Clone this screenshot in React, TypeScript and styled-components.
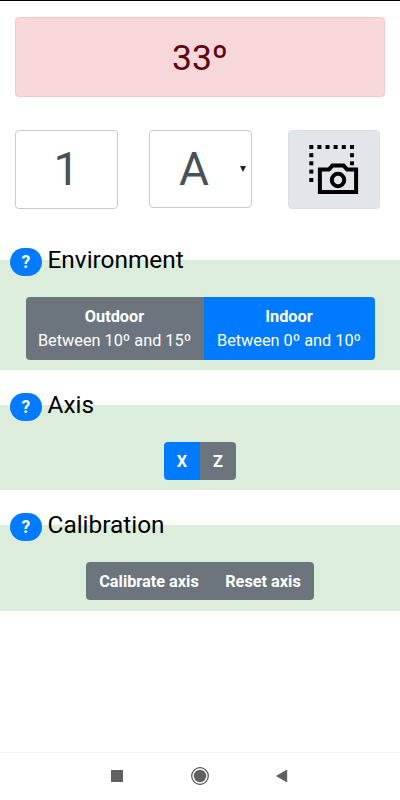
import React from 'react';
import styled, { createGlobalStyle } from 'styled-components';

const GlobalStyle = createGlobalStyle`
  *, *::before, *::after { box-sizing: border-box; }
  body {
    margin: 0;
    background: #fff;
    font-family: Roboto, "Liberation Sans", sans-serif;
    font-size: 16px;
    line-height: 24px;
  }
`;

const Screen = styled.div`
  display: flex;
  flex-direction: column;
  height: 800px;
  border-top: 1px solid #000;
  background: #fff;
  overflow: hidden;
`;

const AngleAlert = styled.div`
  display: flex;
  align-items: center;
  justify-content: center;
  height: 80px;
  margin: 16px 15px 0;
  padding-top: 1px;
  border: 1px solid #f1c8cd;
  border-radius: 4px;
  background: #f7d7da;
  color: #5f0610;
  font-size: 35.5px;
  line-height: 40px;
`;

const Controls = styled.div`
  display: flex;
  align-items: flex-start;
  margin: 33px 0 0 15px;
  height: 80px;
`;

const Field = styled.div<{ $height: number }>`
  position: relative;
  display: flex;
  align-items: center;
  justify-content: center;
  width: 103px;
  height: ${(p) => p.$height}px;
  margin-right: 31px;
  border: 1px solid #c9cbce;
  border-radius: 4px;
  color: #495057;
  font-size: 46px;
`;

const FieldValue = styled.span<{ $inset?: number; $lift?: number }>`
  margin-right: ${(p) => p.$inset ?? 0}px;
  padding-bottom: ${(p) => p.$lift ?? 0}px;
`;

const Caret = styled.svg`
  position: absolute;
  right: 5px;
  top: 35px;
`;

const CaptureButton = styled.button`
  display: flex;
  width: 92px;
  height: 79px;
  margin-left: 5px;
  padding: 0;
  border: 1px solid #dce0e5;
  border-radius: 4px;
  background: #e2e6ea;
`;

const Section = styled.section<{ $height: number; $gap: number }>`
  height: ${(p) => p.$height}px;
  margin-top: ${(p) => p.$gap}px;
  background: #dceddc;
`;

const SectionHeader = styled.header`
  display: flex;
  align-items: center;
  height: 28px;
  margin: -12px 0 0 10px;
`;

const HelpBadge = styled.button`
  width: 31.5px;
  height: 28px;
  padding: 0;
  border: 0;
  border-radius: 14px;
  background: #007bff;
  color: #fff;
  font: 700 17.5px/26px Roboto, sans-serif;
`;

const SectionTitle = styled.h2`
  margin: -4px 0 0 6px;
  color: #000;
  font-size: 24.4px;
  font-weight: 400;
  line-height: 28px;
`;

const SectionBody = styled.div`
  display: flow-root;
`;

const ButtonGroup = styled.div<{ $width: number }>`
  display: flex;
  width: ${(p) => p.$width}px;
  margin: 21px auto 0;
  border-radius: 4px;
  overflow: hidden;
`;

const GroupButton = styled.button<{ $active?: boolean; $width: number }>`
  flex: 0 0 ${(p) => p.$width}px;
  padding: 8px 0 6px;
  border: 0;
  background: ${(p) => (p.$active ? '#007bff' : '#6c757d')};
  color: #fff;
  font: 400 16.3px/24.4px Roboto, sans-serif;
  white-space: nowrap;
`;

const Label = styled.strong`
  display: block;
  font-weight: 700;
`;

const NavBar = styled.nav`
  display: flex;
  align-items: center;
  justify-content: space-between;
  height: 48px;
  margin-top: auto;
  padding: 0 111px 2px 110px;
  border-top: 1px solid #f3f3f3;
`;

const leftDots = [147, 155.2, 163.3, 171.6, 180];
const topDots = [319.4, 327.5, 335.6, 343.8, 352];

const CaptureIcon = () => (
  <svg width="90" height="77" viewBox="289 131 90 77" fill="none">
    {leftDots.map((y) => (
      <rect key={y} x="309.3" y={y - 2} width="4" height="4" fill="#000" />
    ))}
    {topDots.map((x) => (
      <rect key={x} x={x - 2} y="145" width="4" height="4" fill="#000" />
    ))}
    {[155.2, 163.3].map((y) => (
      <rect key={y} x="350" y={y - 2} width="4" height="4" fill="#000" />
    ))}
    <path
      d="M319.9 169.6H328.8L332.5 165.6H343.5L347.2 169.6H356.1V192H319.9Z"
      stroke="#000"
      strokeWidth="4"
    />
    <circle cx="338" cy="180" r="6.2" stroke="#000" strokeWidth="4" />
  </svg>
);

interface PanelProps {
  title: string;
  height: number;
  gap: number;
  children: React.ReactNode;
}

const Panel = ({ title, height, gap, children }: PanelProps) => (
  <Section $height={height} $gap={gap}>
    <SectionHeader>
      <HelpBadge>?</HelpBadge>
      <SectionTitle>{title}</SectionTitle>
    </SectionHeader>
    <SectionBody>{children}</SectionBody>
  </Section>
);

export default function App() {
  return (
    <>
      <GlobalStyle />
      <Screen>
        <AngleAlert>33º</AngleAlert>
        <Controls>
          <Field $height={79}>
            <FieldValue $lift={2}>1</FieldValue>
          </Field>
          <Field $height={78}>
            <FieldValue $inset={13}>A</FieldValue>
            <Caret width="6" height="6" viewBox="0 0 6 6">
              <path d="M0 0H6L3 6Z" fill="#222" />
            </Caret>
          </Field>
          <CaptureButton aria-label="Capture">
            <CaptureIcon />
          </CaptureButton>
        </Controls>
        <Panel title="Environment" height={110} gap={50}>
          <ButtonGroup $width={349}>
            <GroupButton $width={178}>
              <Label>Outdoor</Label>Between 10º and 15º
            </GroupButton>
            <GroupButton $width={171} $active>
              <Label>Indoor</Label>Between 0º and 10º
            </GroupButton>
          </ButtonGroup>
        </Panel>
        <Panel title="Axis" height={85} gap={35}>
          <ButtonGroup $width={72}>
            <GroupButton $width={36} $active>
              <Label>X</Label>
            </GroupButton>
            <GroupButton $width={36}>
              <Label>Z</Label>
            </GroupButton>
          </ButtonGroup>
        </Panel>
        <Panel title="Calibration" height={85.5} gap={35}>
          <ButtonGroup $width={228}>
            <GroupButton $width={126}>
              <Label>Calibrate axis</Label>
            </GroupButton>
            <GroupButton $width={102}>
              <Label>Reset axis</Label>
            </GroupButton>
          </ButtonGroup>
        </Panel>
        <NavBar>
          <svg width="14" height="14" viewBox="0 0 14 14">
            <path d="M1 1H13V13H1Z" fill="#606060" />
          </svg>
          <svg width="20" height="20" viewBox="0 0 20 20">
            <circle cx="10" cy="10" r="8.3" fill="none" stroke="#505050" strokeWidth="1.2" />
            <circle cx="10" cy="10" r="6.2" fill="#606060" />
          </svg>
          <svg width="14" height="14" viewBox="0 0 14 14">
            <path d="M0.8 7L12.2 0.5V13.5Z" fill="#606060" />
          </svg>
        </NavBar>
      </Screen>
    </>
  );
}
